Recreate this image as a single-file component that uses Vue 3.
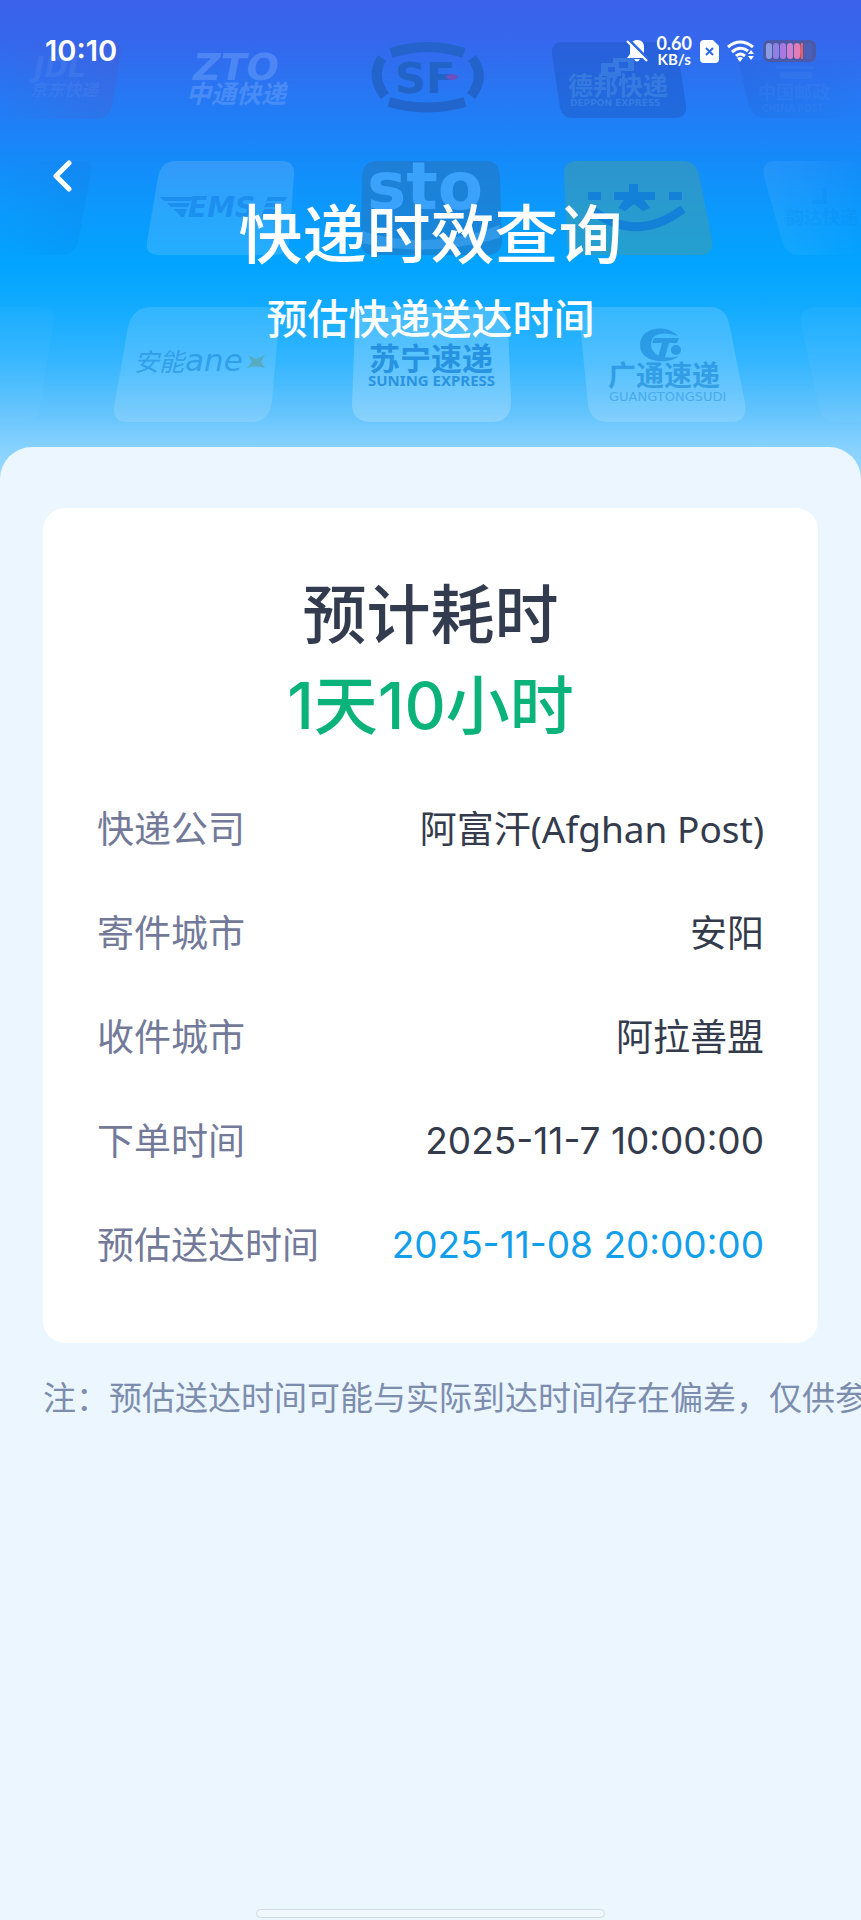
<script setup>
const rows = [
  { label: '快递公司', value: '阿富汗(Afghan Post)' },
  { label: '寄件城市', value: '安阳' },
  { label: '收件城市', value: '阿拉善盟' },
  { label: '下单时间', value: '2025-11-7 10:00:00', kind: 'num' },
  { label: '预估送达时间', value: '2025-11-08 20:00:00', kind: 'num accent' },
]
const cells = [
  { x: 3, c: '#8d9be0' },
  { x: 10, c: '#9180e4' },
  { x: 17, c: '#a67ae0' },
  { x: 24, c: '#cf7fcb' },
  { x: 31, c: '#e07db4' },
]
</script>

<template>
  <div class="page">
    <header class="hero">
      <svg class="backdrop" viewBox="0 0 861 484" preserveAspectRatio="xMidYMin slice" aria-hidden="true">
        <defs>
          <linearGradient id="fadeL" x1="0" x2="1">
            <stop offset="0" stop-color="#5a4fc0" stop-opacity="0" />
            <stop offset="1" stop-color="#5a4fc0" stop-opacity=".24" />
          </linearGradient>
          <linearGradient id="fadeDark" x1="0" x2="1">
            <stop offset="0" stop-color="#0d6fd0" stop-opacity="0" />
            <stop offset="1" stop-color="#0d6fd0" stop-opacity=".16" />
          </linearGradient>
          <linearGradient id="fadeR" x1="0" x2="1">
            <stop offset="0" stop-color="#fff" stop-opacity=".07" />
            <stop offset="1" stop-color="#fff" stop-opacity="0" />
          </linearGradient>
          <linearGradient id="fadeRD" x1="0" x2="1">
            <stop offset="0" stop-color="#1c4fb8" stop-opacity=".16" />
            <stop offset="1" stop-color="#1c4fb8" stop-opacity="0" />
          </linearGradient>
        </defs>

        <path d="M0 42H112Q123 42 121 54L112 106Q109 119 96 119H0Z" fill="url(#fadeL)" />
        <g fill="#5d92f0" font-weight="700" font-style="italic">
          <text x="34" y="77" class="wide" font-size="28" opacity=".24">JDL</text>
          <text x="30" y="96" font-size="17" opacity=".22">京东快递</text>
        </g>

        <g fill="#6aa0fa" font-style="italic" font-weight="700" opacity=".5">
          <text x="193" y="80" class="wide" font-size="38">ZTO</text>
          <text x="186" y="103" font-size="25">中通快递</text>
        </g>

        <g fill="none" stroke="#2263c8" stroke-width="10" opacity=".9">
          <path d="M391 53Q427 41 464 53" />
          <path d="M389 102Q427 113 465 102" />
          <path d="M382 58Q370 76 385 96" />
          <path d="M472 58Q486 76 471 96" />
        </g>
        <text x="395" y="93" class="wide" fill="#2263c8" font-size="43" font-weight="700">SF</text>
        <ellipse cx="452" cy="77" rx="6" ry="3" fill="#6c50c0" />

        <path d="M562 42H666Q676 42 678 52L686 106Q687 118 674 118H574Q562 118 560 108L552 54Q551 42 562 42Z" fill="#1d57c4" opacity=".45" />
        <g fill="#4288e4" opacity=".6">
          <path d="M613 58H634V71H621V76H601V63H613ZM608 67V72H615V67ZM619 62V68H628V62Z" fill-rule="evenodd" />
          <text x="568" y="95" font-size="25" font-weight="700">德邦快递</text>
          <text x="570" y="106" font-size="9" font-weight="700" class="wide">DEPPON EXPRESS</text>
        </g>

        <path d="M738 60H861V118H766Q752 118 749 106Z" fill="url(#fadeRD)" />
        <g fill="#4a8bf0" opacity=".2" font-weight="700">
          <path d="M776 66H814V69H776ZM780 72H812V79H780Z" />
          <text x="758" y="99" font-size="18">中国邮政</text>
          <text x="762" y="112" font-size="10">CHINA POST</text>
        </g>

        <path d="M0 161H82Q93 161 91 173L78 242Q75 255 62 255H0Z" fill="url(#fadeDark)" />

        <path d="M176 161H282Q295 161 294 175L289 242Q288 255 274 255H159Q145 255 147 242L158 177Q161 161 176 161Z" fill="#fff" opacity=".13" />
        <g fill="#1584ea" opacity=".65">
          <path d="M160 197H193L191 201H164ZM167 203H190L188 207H171ZM174 209H187L184 217H181ZM268 197H287L285 201H266ZM266 203H283L281 207H264ZM264 209H277L272 217H261Z" />
          <text x="188" y="217" class="wide" font-size="28" font-weight="700" font-style="italic">EMS</text>
        </g>

        <path d="M378 161H486Q499 161 500 176L502 240Q502 255 487 255H375Q360 255 361 240L362 176Q363 161 378 161Z" fill="#2674bd" opacity=".56" />
        <text x="367" y="209" class="wide" fill="#3aa2fb" font-size="66" font-weight="700">sto</text>
        <path d="M362 231Q430 252 500 225V238Q430 258 361 243Z" fill="#319ae8" />

        <path d="M577 161H682Q696 161 699 175L712 240Q714 255 700 255H582Q568 255 567 242L564 175Q563 161 577 161Z" fill="#439da5" opacity=".52" />
        <g fill="#1381d8">
          <path d="M588 192H601V200H588ZM669 192H682V200H669ZM629 184H638V192H655V200H644L650 208L643 211L634 204L625 211L618 208L624 200H614V192H629Z" />
          <path d="M592 210Q636 244 683 209" fill="none" stroke="#1381d8" stroke-width="9" />
        </g>

        <path d="M776 161H861V255H800Q786 255 782 241L764 176Q761 161 776 161Z" fill="url(#fadeR)" />
        <g fill="#0b7de0" opacity=".14">
          <text x="786" y="224" font-size="18" font-weight="700">韵达快递</text>
          <path d="M812 200H822V188H827V204H812Z" />
        </g>

        <path d="M0 307H42Q55 307 54 320L40 406Q37 422 22 422H0Z" fill="#fff" opacity=".03" />

        <path d="M151 307H266Q280 307 279 321L272 401Q269 422 252 422H127Q113 422 114 407L128 327Q133 307 151 307Z" fill="#fff" opacity=".13" />
        <g fill="#218bdc" opacity=".6" font-style="italic">
          <text x="134" y="371" font-size="25">安能</text>
          <text x="185" y="371" class="wide" font-size="31">ane</text>
          <path d="M248 355L256 359L265 355L261 362L265 368L256 366L247 368L252 362Z" fill="#5b9f9b" />
        </g>

        <path d="M372 307H490Q507 307 508 324L511 402Q511 422 491 422H371Q351 422 352 402L355 324Q356 307 372 307Z" fill="#fff" opacity=".2" />
        <g fill="#1483d8" opacity=".75" font-weight="700">
          <text x="369" y="370" font-size="31">苏宁速递</text>
          <text x="368" y="386" font-size="15">SUNING EXPRESS</text>
        </g>

        <path d="M596 307H710Q725 307 729 323L745 403Q748 422 731 422H608Q591 422 588 405L580 324Q578 307 596 307Z" fill="#fff" opacity=".15" />
        <g fill="#1c8ad9" opacity=".65" font-weight="700">
          <path d="M678 336C668 324 640 326 640 345C640 363 668 365 679 356C665 360 651 356 651 344C651 333 664 331 678 336Z" />
          <path d="M654 338H679L677 343H669L665 357H658L662 343H652Z" />
          <circle cx="676" cy="350" r="5" />
          <text x="608" y="386" font-size="28">广通速递</text>
        </g>
        <text x="609" y="401" font-size="13" class="wide" fill="#1c8ad9" opacity=".45">GUANGTONGSUDI</text>

        <path d="M816 307H861V422H836Q822 422 819 407L801 324Q798 307 816 307Z" fill="#fff" opacity=".04" />
      </svg>

      <div class="status">
        <time class="clock">10:10</time>
        <div class="indicators">
          <svg width="22" height="24" viewBox="0 0 22 24" aria-label="静音">
            <path d="M11 1C6 1 4 5 4 8V15L1 19H21L18 15V8C18 4 16 1 11 1ZM8 20Q11 25 14 20Z" fill="#fff" />
            <path d="M2 0L22 20" stroke="#2e69ea" stroke-width="3" />
            <path d="M1 2L21 22" stroke="#fff" stroke-width="2" />
          </svg>
          <div class="speed"><span class="rate">0.60</span><span class="unit">KB/s</span></div>
          <svg width="19" height="23" viewBox="0 0 19 23" aria-label="无SIM卡">
            <path d="M4 0H13L19 6V19Q19 23 15 23H4Q0 23 0 19V4Q0 0 4 0Z" fill="#fff" />
            <path d="M6 8L13 15M13 8L6 15" stroke="#2e69ea" stroke-width="2" />
          </svg>
          <svg width="28" height="22" viewBox="0 0 28 22" aria-label="无线网络">
            <g fill="none" stroke="#fff" stroke-width="3">
              <path d="M1 7Q13 -3 26 7" />
              <path d="M5 12Q13 5 21 11" />
              <path d="M9 16Q13 12 18 16" />
            </g>
            <path d="M10 18Q13 16 16 18L13 22Z" fill="#fff" />
            <path d="M24 10L27 14H21ZM21 16H27L24 20Z" fill="#fff" />
          </svg>
          <svg class="battery" width="53" height="22" viewBox="0 0 53 22" aria-label="电量">
            <rect width="53" height="22" rx="6" fill="#4b5aa8" />
            <rect v-for="c in cells" :key="c.x" :x="c.x" y="3" width="6" height="16" rx="3" :fill="c.c" />
            <path d="M38 3H40V19H38Q36 11 38 3Z" fill="#e5606f" />
            <rect x="41" y="3" width="8" height="16" rx="2" fill="#4c5fb8" />
          </svg>
        </div>
      </div>

      <nav class="nav">
        <button class="back" type="button" aria-label="返回">
          <svg width="20" height="32" viewBox="0 0 20 32">
            <path d="M17 3L4 16L17 29" fill="none" stroke="#fff" stroke-width="5" stroke-linecap="round" stroke-linejoin="round" />
          </svg>
        </button>
      </nav>
      <h1>快递时效查询</h1>
      <p class="subtitle">预估快递送达时间</p>
    </header>

    <main class="sheet">
      <section class="card">
        <h2>预计耗时</h2>
        <p class="duration">1天10小时</p>
        <dl>
          <div v-for="r in rows" :key="r.label" class="row">
            <dt>{{ r.label }}</dt>
            <dd :class="r.kind">{{ r.value }}</dd>
          </div>
        </dl>
      </section>
      <p class="note">注：预估送达时间可能与实际到达时间存在偏差，仅供参考</p>
      <div class="home-bar"></div>
    </main>
  </div>
</template>

<style>
body {
  background: #ebf6ff;
}
</style>

<style scoped>
* {
  box-sizing: border-box;
}
.page {
  display: flex;
  flex-direction: column;
  min-height: 100vh;
  overflow: hidden;
  font-family: 'Noto Sans', 'Noto Sans CJK SC', sans-serif;
}
h1, h2, p, dl, dd {
  margin: 0;
}
.hero {
  position: relative;
  isolation: isolate;
  padding-bottom: 141px;
  color: #fff;
  text-align: center;
  background: linear-gradient(#3b62ea 0, #3567ed 40px, #247af4 104px, #1788f9 150px, #0a9afd 214px, #02a4ff 264px, #10aaff 304px, #36b6ff 364px, #61c3fc 410px, #86d1fe 447px, #9adaff 484px);
}
.backdrop {
  position: absolute;
  inset: 0;
  z-index: -1;
  width: 100%;
  height: 100%;
}
.wide {
  font-family: 'DejaVu Sans', sans-serif;
}
.status {
  display: flex;
  align-items: center;
  justify-content: space-between;
  height: 102px;
  padding: 0 45px;
}
.clock {
  font: 600 29px/36px Inter, sans-serif;
}
.indicators {
  display: flex;
  align-items: center;
  gap: 8px;
}
.speed {
  display: flex;
  flex-direction: column;
  align-items: center;
  font-family: Lato, sans-serif;
  font-weight: 700;
}
.rate {
  font-size: 18px;
  line-height: 16px;
}
.unit {
  font-size: 15px;
  line-height: 16px;
}
.nav {
  display: flex;
  padding: 48px 42px 0;
}
.back {
  display: flex;
  align-items: center;
  justify-content: center;
  width: 40px;
  height: 52px;
  padding: 0;
  border: 0;
  background: none;
}
h1 {
  font-size: 64px;
  font-weight: 500;
  line-height: 64px;
}
.subtitle {
  margin-top: 28px;
  font-size: 41px;
  font-weight: 500;
  line-height: 48px;
}
.sheet {
  position: relative;
  flex: 1;
  display: flex;
  flex-direction: column;
  margin-top: -36px;
  padding: 61px 43px 2px;
  border-radius: 32px 32px 0 0;
  background: #ebf6ff;
}
.card {
  padding: 66px 54px 72px;
  border-radius: 22px;
  background: #fff;
}
h2, .duration {
  font-size: 64px;
  font-weight: 500;
  line-height: 80px;
  text-align: center;
}
h2 {
  color: #333b4f;
}
.duration {
  margin-top: 12px;
  font-family: Inter, 'Noto Sans CJK SC', sans-serif;
  color: #0bb37a;
}
dl {
  display: flex;
  flex-direction: column;
  gap: 52px;
  margin-top: 57px;
}
.row {
  display: flex;
  justify-content: space-between;
  font-size: 37px;
  line-height: 52px;
}
dt {
  color: #737a99;
}
dd {
  color: #333b4c;
}
.num {
  font-family: Inter, sans-serif;
}
.accent {
  color: #119eea;
}
.note {
  margin-top: 33px;
  font-size: 33px;
  line-height: 44px;
  white-space: nowrap;
  color: #7d8dad;
}
.home-bar {
  align-self: center;
  width: 45%;
  height: 9px;
  margin-top: auto;
  border: 1px solid #d0dbe6;
  border-radius: 5px;
  background: #f0f7ff;
}
</style>
